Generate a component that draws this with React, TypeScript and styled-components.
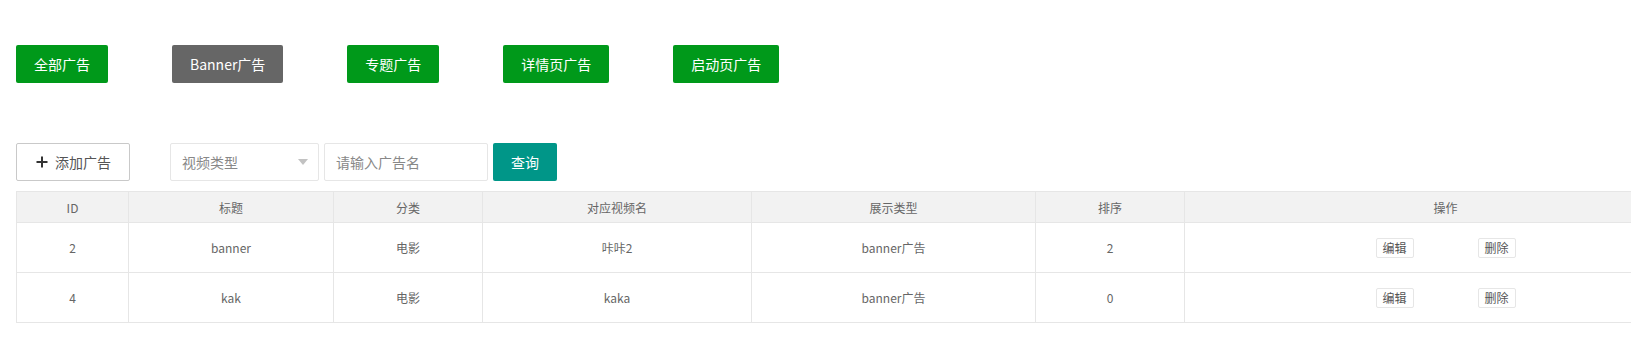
import React from 'react'
import styled, { createGlobalStyle } from 'styled-components'

const GlobalStyle = createGlobalStyle`
  html, body {
    margin: 0;
    padding: 0;
    background: #fff;
    overflow: hidden;
  }
  body {
    font-family: "Noto Sans CJK SC", "Noto Sans", sans-serif;
    color: #666;
  }
`

const Page = styled.div`
  padding: 45px 0 0 16px;
  overflow: hidden;
`

const TypeBar = styled.div`
  display: flex;
  gap: 64px;
`

const TypeButton = styled.button<{ $active?: boolean }>`
  height: 38px;
  padding: 0 18px;
  border: none;
  border-radius: 2px;
  background: ${(p) => (p.$active ? '#666666' : '#00991a')};
  color: #fff;
  font-family: inherit;
  font-size: 14px;
  line-height: 38px;
  white-space: nowrap;
  cursor: pointer;
`

const Toolbar = styled.div`
  display: flex;
  align-items: center;
  margin-top: 60px;
`

const AddButton = styled.button`
  display: flex;
  align-items: center;
  box-sizing: border-box;
  height: 38px;
  padding: 0 18px;
  margin-right: 40px;
  border: 1px solid #c9c9c9;
  border-radius: 2px;
  background: #fff;
  color: #555;
  font-family: inherit;
  font-size: 14px;
  cursor: pointer;

  svg {
    margin-right: 6px;
  }
`

const Select = styled.div`
  display: flex;
  align-items: center;
  justify-content: space-between;
  box-sizing: border-box;
  width: 149px;
  height: 38px;
  padding: 0 10px 0 11px;
  margin-right: 5px;
  border: 1px solid #e6e6e6;
  border-radius: 2px;
  color: #888;
  font-size: 14px;
`

const Caret = styled.span`
  width: 0;
  height: 0;
  border-left: 5px solid transparent;
  border-right: 5px solid transparent;
  border-top: 6px solid #c2c2c2;
`

const SearchInput = styled.input`
  box-sizing: border-box;
  width: 164px;
  height: 38px;
  padding: 0 11px;
  margin: 0 5px 0 0;
  border: 1px solid #e6e6e6;
  border-radius: 2px;
  font-family: inherit;
  font-size: 14px;
  color: #666;
  outline: none;

  &::placeholder {
    color: #888;
  }
`

const QueryButton = styled.button`
  height: 38px;
  padding: 0 18px;
  border: none;
  border-radius: 2px;
  background: #009688;
  color: #fff;
  font-family: inherit;
  font-size: 14px;
  cursor: pointer;
`

const Table = styled.table`
  margin-top: 10px;
  border-collapse: collapse;
  table-layout: fixed;
  width: 1690px;
  font-size: 12px;
  color: #666;
`

const HeadCell = styled.th`
  height: 30px;
  padding: 0;
  background: #f2f2f2;
  border: 1px solid #e6e6e6;
  font-weight: normal;
  text-align: center;
`

const Cell = styled.td`
  height: 49px;
  padding: 0;
  border: 1px solid #e6e6e6;
  text-align: center;
`

const Actions = styled.div`
  display: flex;
  justify-content: center;
  gap: 64px;
`

const SmallButton = styled.button`
  box-sizing: border-box;
  width: 38px;
  height: 20px;
  padding: 0;
  border: 1px solid #e6e6e6;
  border-radius: 2px;
  background: #fff;
  color: #555;
  font-family: inherit;
  font-size: 12px;
  line-height: 18px;
  cursor: pointer;
`

const PlusIcon = () => (
  <svg width="14" height="14" viewBox="0 0 14 14">
    <path d="M7 1.5v11M1.5 7h11" stroke="#333" strokeWidth="2" fill="none" />
  </svg>
)

const types = ['全部广告', 'Banner广告', '专题广告', '详情页广告', '启动页广告']

const columns = [
  { title: 'ID', width: 112 },
  { title: '标题', width: 205 },
  { title: '分类', width: 149 },
  { title: '对应视频名', width: 269 },
  { title: '展示类型', width: 284 },
  { title: '排序', width: 149 },
  { title: '操作', width: 522 },
]

const rows = [
  { id: 2, title: 'banner', category: '电影', video: '咔咔2', display: 'banner广告', sort: 2 },
  { id: 4, title: 'kak', category: '电影', video: 'kaka', display: 'banner广告', sort: 0 },
]

const App: React.FC = () => {
  return (
    <Page>
      <GlobalStyle />
      <TypeBar>
        {types.map((t) => (
          <TypeButton key={t} $active={t === 'Banner广告'}>
            {t}
          </TypeButton>
        ))}
      </TypeBar>

      <Toolbar>
        <AddButton>
          <PlusIcon />
          添加广告
        </AddButton>
        <Select>
          视频类型
          <Caret />
        </Select>
        <SearchInput placeholder="请输入广告名" />
        <QueryButton>查询</QueryButton>
      </Toolbar>

      <Table>
        <colgroup>
          {columns.map((c) => (
            <col key={c.title} style={{ width: c.width }} />
          ))}
        </colgroup>
        <thead>
          <tr>
            {columns.map((c) => (
              <HeadCell key={c.title}>{c.title}</HeadCell>
            ))}
          </tr>
        </thead>
        <tbody>
          {rows.map((r) => (
            <tr key={r.id}>
              <Cell>{r.id}</Cell>
              <Cell>{r.title}</Cell>
              <Cell>{r.category}</Cell>
              <Cell>{r.video}</Cell>
              <Cell>{r.display}</Cell>
              <Cell>{r.sort}</Cell>
              <Cell>
                <Actions>
                  <SmallButton>编辑</SmallButton>
                  <SmallButton>删除</SmallButton>
                </Actions>
              </Cell>
            </tr>
          ))}
        </tbody>
      </Table>
    </Page>
  )
}

export default App
